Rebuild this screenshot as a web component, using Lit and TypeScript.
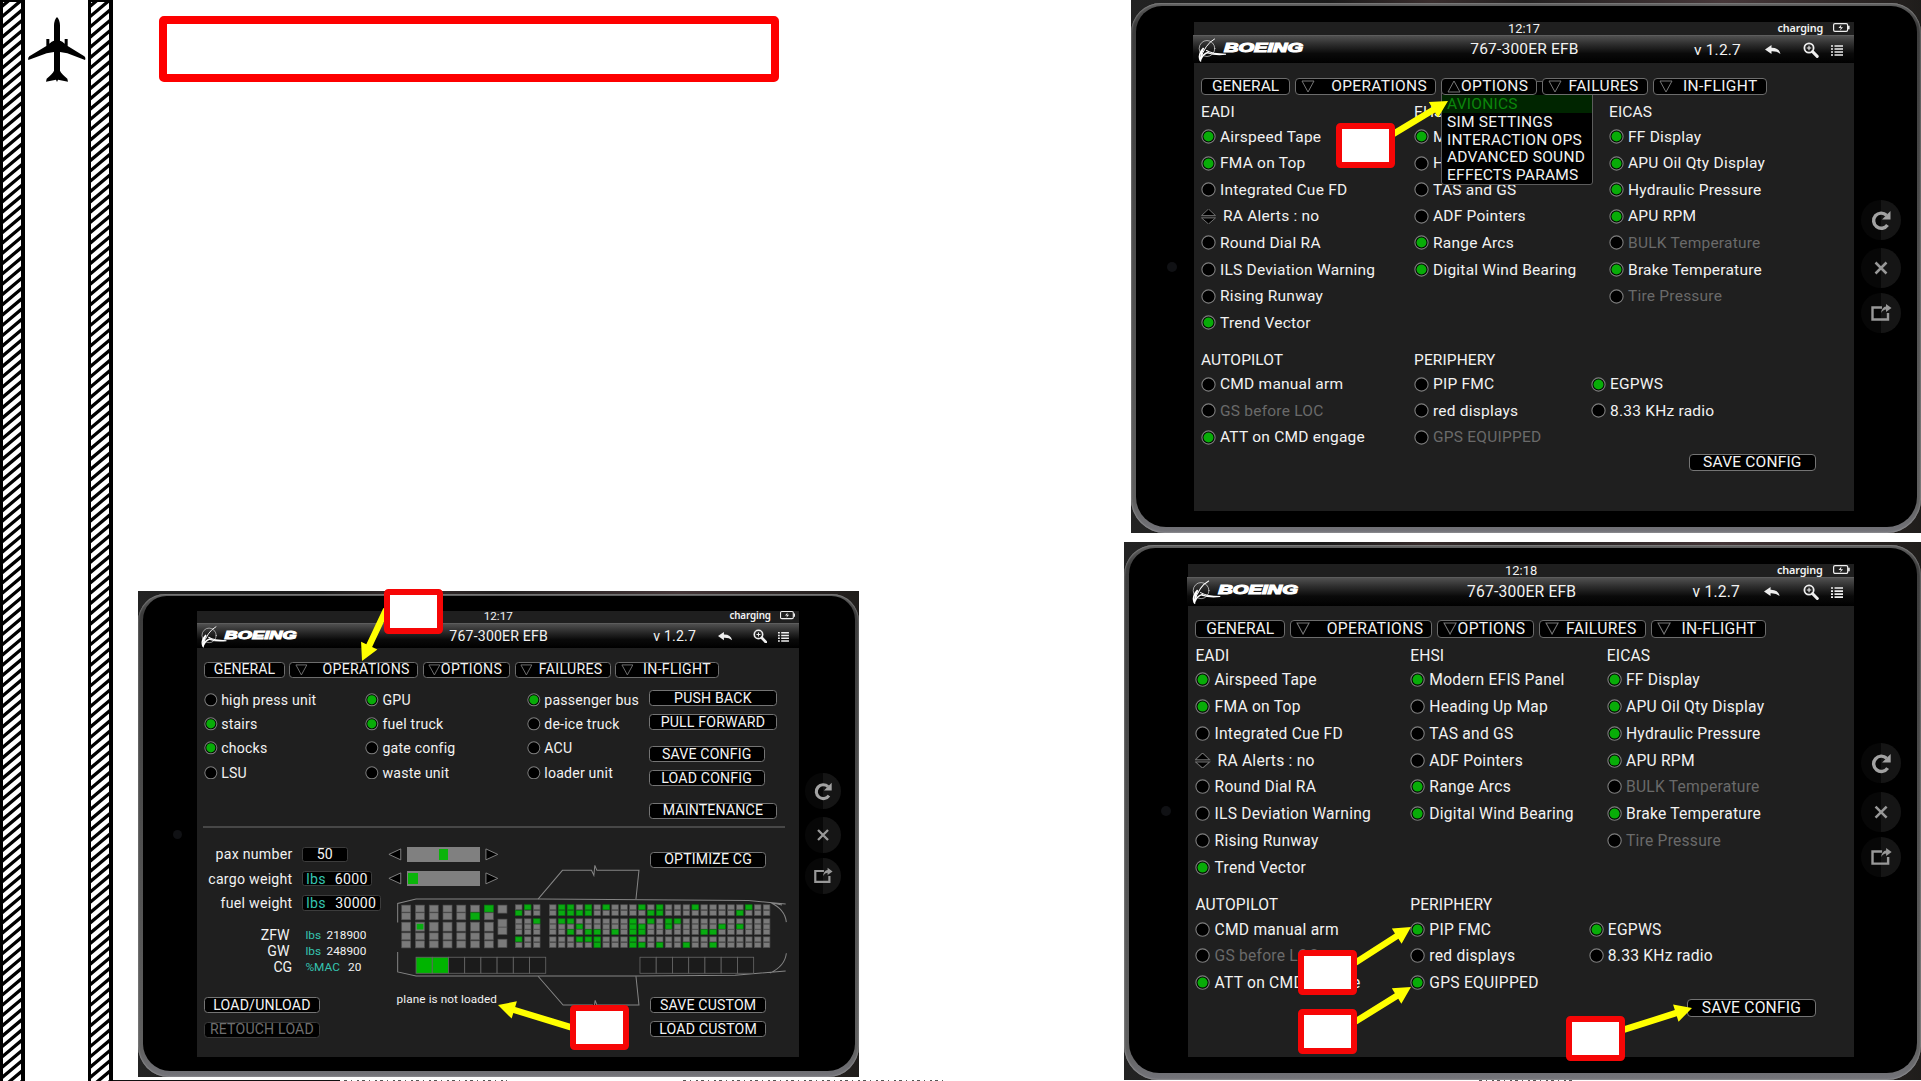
import { LitElement, html, svg, css, nothing } from "lit";
import { customElement, property } from "lit/decorators.js";
import { classMap } from "lit/directives/class-map.js";

type State = "on" | "off" | "dim" | "spin";
type Item = [string, State];
interface Section { title: string; items: Item[]; }

const ui = css`
  :host { display: block; font-family: Roboto, "Liberation Sans", sans-serif; font-size: 15.5px; color: #f2f2f2; }
  * { box-sizing: border-box; }
  .btn { display: flex; align-items: center; justify-content: center; height: 17.5px; width: 127.5px; border: 1px solid #747474; border-radius: 4px; background: #000; white-space: nowrap; line-height: 16px; letter-spacing: 0.2px; color: #f4f4f4; }
  .btn.wide { width: 141px; }
  .btn.disabled { color: #6e6e6e; border-color: #3a3a3a; }
`;

@customElement("efb-toggle")
class EfbToggle extends LitElement {
  @property() label = "";
  @property() state: State = "off";
  static styles = css`
    :host { display: flex; align-items: center; height: 26.6px; white-space: nowrap; font-size: 15.5px; letter-spacing: 0.23px; }
    .mark { width: 15px; height: 15px; margin-right: 4px; flex: none; }
    .spin { margin-right: 7px; }
    .dim { color: #6a6a6a; }
  `;
  render() {
    const spin = this.state === "spin";
    return html`
      <svg class=${classMap({ mark: true, spin })} viewBox="0 0 15 15">
        ${spin
          ? svg`<path d="M0.5 6.6 7.5 0 14.5 6.6Z M0.5 8.9 7.5 15 14.5 8.9Z" fill="#000" stroke="#6f6f6f" stroke-width="1"/>`
          : svg`<circle cx="7.5" cy="7.5" r="6.6" fill="#000" stroke="#7d7d7d" stroke-width="1.1"/>`}
        ${this.state === "on" ? svg`<circle cx="7.5" cy="7.5" r="5" fill="#08ac08"/>` : nothing}
      </svg>
      <span class=${this.state === "dim" ? "dim" : ""}>${this.label}</span>`;
  }
}

@customElement("efb-tabs")
class EfbTabs extends LitElement {
  @property({ type: Boolean }) open = false;
  static styles = [ui, css`
    :host { position: relative; }
    .bar { display: grid; grid-template-columns: 89px 141px 96px 105.5px 114px; column-gap: 5px; }
    .tab { position: relative; z-index: 1; display: flex; align-items: center; justify-content: space-between; height: 17.5px; padding: 0 8px 0 6px; border: 1px solid #6c6c6c; border-radius: 4px; background: #000; line-height: 16px; letter-spacing: 0.35px; white-space: nowrap; }
    .plain { justify-content: center; padding: 0; letter-spacing: 0; }
    .tri { width: 14px; height: 13px; flex: none; margin-left: -1px; }
    .menu { position: absolute; left: 240px; top: 3.5px; width: 152px; padding-top: 13px; height: 104px; background: #000; border: 1px solid #5c5c5c; border-radius: 3px; }
    .entry { height: 17.8px; line-height: 18px; padding-left: 5px; letter-spacing: 0.25px; white-space: nowrap; }
    .sel { background: #002500; color: #0b860b; }
  `];
  render() {
    const tabs = ["GENERAL", "OPERATIONS", "OPTIONS", "FAILURES", "IN-FLIGHT"];
    return html`
      <nav class="bar">
        ${tabs.map((t, i) => html`<div class=${classMap({ tab: true, plain: i === 0 })}>
          ${i === 0 ? nothing : html`<svg class="tri" viewBox="0 0 14 13"><path d=${this.open && i === 2 ? "M1 12 7 1 13 12Z" : "M1 1H13L7 12Z"} fill="none" stroke="#777"/></svg>`}
          <span>${t}</span></div>`)}
      </nav>
      ${this.open ? html`<div class="menu">
        ${["AVIONICS", "SIM SETTINGS", "INTERACTION OPS", "ADVANCED SOUND", "EFFECTS PARAMS"].map((m, i) =>
          html`<div class=${classMap({ entry: true, sel: i === 0 })}>${m}</div>`)}
      </div>` : nothing}`;
  }
}

@customElement("efb-options")
class EfbOptions extends LitElement {
  @property({ type: Boolean }) saved = false;
  static styles = [ui, css`
    .upper, .lower { display: grid; }
    .upper { grid-template-columns: 213px 195px auto; padding-top: 6.1px; }
    .lower { grid-template-columns: 213px 177px auto; margin-top: 12.5px; }
    .head { height: 22.2px; line-height: 23.4px; letter-spacing: 0.1px; }
    .save { margin: 3px 0 0 487.6px; }
  `];
  col(s: Section) {
    return html`<section><div class="head">${s.title}</div>
      ${s.items.map(([l, st]) => html`<efb-toggle .label=${l} .state=${st}></efb-toggle>`)}</section>`;
  }
  render() {
    const pip: State = this.saved ? "on" : "off";
    const gps: State = this.saved ? "on" : "dim";
    const upper: Section[] = [
      { title: "EADI", items: [["Airspeed Tape", "on"], ["FMA on Top", "on"], ["Integrated Cue FD", "off"], ["RA Alerts : no", "spin"], ["Round Dial RA", "off"], ["ILS Deviation Warning", "off"], ["Rising Runway", "off"], ["Trend Vector", "on"]] },
      { title: "EHSI", items: [["Modern EFIS Panel", "on"], ["Heading Up Map", "off"], ["TAS and GS", "off"], ["ADF Pointers", "off"], ["Range Arcs", "on"], ["Digital Wind Bearing", "on"]] },
      { title: "EICAS", items: [["FF Display", "on"], ["APU Oil Qty Display", "on"], ["Hydraulic Pressure", "on"], ["APU RPM", "on"], ["BULK Temperature", "dim"], ["Brake Temperature", "on"], ["Tire Pressure", "dim"]] },
    ];
    const lower: Section[] = [
      { title: "AUTOPILOT", items: [["CMD manual arm", "off"], ["GS before LOC", "dim"], ["ATT on CMD engage", "on"]] },
      { title: "PERIPHERY", items: [["PIP FMC", pip], ["red displays", "off"], ["GPS EQUIPPED", gps]] },
      { title: "", items: [["EGPWS", "on"], ["8.33 KHz radio", "off"]] },
    ];
    return html`
      <div class="upper">${upper.map((s) => this.col(s))}</div>
      <div class="lower">${lower.map((s) => this.col(s))}</div>
      <div class="btn save">SAVE CONFIG</div>`;
  }
}

/* Seat rows a..g of the economy cabin, keyed by column. */
const ECON_Y: Record<string, number> = { a: 162, b: 179, c: 204, d: 220, e: 236, f: 258, g: 275 };
const ECON_X = [402, 429, 456, ...Array.from({ length: 25 }, (_, i) => 504 + i * 26.66)];
const TAKEN: Record<number, string> = {
  0: "bf", 1: "a", 2: "c", 4: "abc", 5: "abce", 6: "bdf", 7: "abef", 8: "efg", 9: "a", 10: "e",
  12: "cdefg", 13: "adeg", 14: "bc", 15: "abg", 16: "cd", 17: "c", 18: "g", 19: "a", 20: "e",
  21: "eg", 22: "d", 24: "bd", 25: "a",
};

@customElement("efb-cabin")
class EfbCabin extends LitElement {
  static styles = css`
    :host { display: block; }
    .cabin { display: block; width: 100%; }
  `;
  seat(x: number, y: number, w: number, h: number, on: boolean) {
    return svg`<rect x=${x} y=${y} width=${w} height=${h} fill=${on ? "#08ac10" : "#7a7a7a"} stroke=${on ? "#0a7d10" : "#505050"} stroke-width="2"/>`;
  }
  render() {
    const biz: unknown[] = [];
    for (let i = 0; i < 7; i++) {
      const x = 62 + i * 41.2;
      [163, 186, 214, 246, 270].forEach((y, r) =>
        biz.push(this.seat(x, y, 27, r === 2 ? 27 : 21, i === 5 && r === 1 || i === 6 && r === 0)));
    }
    biz.push(svg`<rect x="107" y="219" width="20" height="17" fill="#08ac10"/>`);
    [[163, 24], [205, 24], [229, 22], [265, 25]].forEach(([y, h]) => biz.push(this.seat(350, y, 27, h, false)));
    const econ = ECON_X.map((x, i) => Object.entries(ECON_Y).map(([k, y]) => this.seat(x, y, 20, 15, (TAKEN[i] ?? "").includes(k))));
    return html`<svg class="cabin" viewBox="45 40 1170 430">
      <g fill="none" stroke="#858585" stroke-width="3">
        <path d="M50 215V158L105 145H480L1100 149 1211 160M1165 155Q1209 175 1213 214M1165 155 1200 163"/>
        <path d="M50 303V363L105 375H770L1060 373 1211 360M1165 366Q1209 345 1213 307"/>
        <path d="M470 145 543 59H630L637 74 640 44 646 59H772L763 145"/>
        <path d="M470 376 545 462H633L637 474 641 448 646 462H772L763 376"/>
      </g>
      ${biz}${econ}
      <g fill="none" stroke="#666" stroke-width="2.5">
        ${Array.from({ length: 8 }, (_, i) => svg`<rect x=${105 + i * 48.5} y="319" width="48.5" height="48" fill=${i < 2 ? "#00b400" : "#1b1b1b"}/>`)}
        ${Array.from({ length: 7 }, (_, i) => svg`<rect x=${775 + i * 48.6} y="319" width="48.6" height="48" fill="#1b1b1b"/>`)}
      </g>
    </svg>`;
  }
}

@customElement("efb-operations")
class EfbOperations extends LitElement {
  static styles = [ui, css`
    .services { display: flex; height: 163px; }
    .toggles { display: grid; grid-template-columns: 177px 177.5px 133px; width: 488px; padding-top: 11.2px; align-content: start; }
    .actions { display: flex; flex-direction: column; padding-top: 13.5px; }
    .g1 { margin-top: 9px; }
    .g2 { margin-top: 18px; }
    .rule { width: 639px; height: 2px; margin-left: -1px; background: #474747; }
    .load { display: grid; grid-template-columns: 211.5px 428px; }
    .left { padding-top: 15.7px; }
    .field { display: flex; align-items: center; height: 26.7px; letter-spacing: 0.3px; }
    .name { width: 97.3px; margin-right: 10px; text-align: right; flex: none; white-space: nowrap; }
    .box { display: flex; align-items: center; height: 17px; padding: 0 4px; border: 1px solid #3c3c3c; border-radius: 3px; background: #000; justify-content: space-between; }
    .pax { width: 51px; justify-content: center; }
    .cargo { width: 77.5px; }
    .fuel { width: 87px; }
    .unit { color: #35c4b0; }
    .sums { padding-top: 13px; }
    .sum { display: flex; align-items: center; height: 17.7px; }
    .sum .name { width: 94px; margin-right: 17.5px; }
    .sum .unit { font-size: 13px; margin-right: 6px; }
    .sum .num { font-size: 13px; }
    .sum.cg .name { width: 97px; margin-right: 14.5px; }
    .sum.cg .unit { margin-right: 9px; }
    .foot { padding-top: 24px; display: flex; flex-direction: column; gap: 9.3px; }
    .head { display: flex; justify-content: space-between; height: 42px; padding: 0 22.5px 0 0; margin-top: 20.6px; }
    .sliders { display: flex; flex-direction: column; gap: 9.5px; margin-left: -9px; }
    .slider { display: flex; align-items: center; gap: 5px; height: 17px; }
    .track { width: 80.5px; height: 17px; background: #808080; display: flex; align-items: center; }
    .thumb { width: 10px; height: 12.5px; background: #0ab40a; }
    .arrow { width: 15px; height: 14px; }
    .optimize { margin-top: 5.5px; }
    .plane { margin-top: -22.5px; margin-left: -1px; }
    .base { display: flex; justify-content: space-between; margin-top: -12.3px; padding-right: 22.5px; }
    .note { font-size: 12.9px; letter-spacing: 0.1px; line-height: 14px; margin-top: -4px; }
    .stack { display: flex; flex-direction: column; gap: 9.3px; }
  `];
  slider(pos: number) {
    return html`<div class="slider">
      <svg class="arrow" viewBox="0 0 15 14"><path d="M14 1V13L1 7Z" fill="#000" stroke="#888"/></svg>
      <div class="track"><div class="thumb" style="margin-left:${pos}px"></div></div>
      <svg class="arrow" viewBox="0 0 15 14"><path d="M1 1V13L14 7Z" fill="#000" stroke="#888"/></svg>
    </div>`;
  }
  render() {
    const cols: Item[][] = [
      [["high press unit", "off"], ["stairs", "on"], ["chocks", "on"], ["LSU", "off"]],
      [["GPU", "on"], ["fuel truck", "on"], ["gate config", "off"], ["waste unit", "off"]],
      [["passenger bus", "on"], ["de-ice truck", "off"], ["ACU", "off"], ["loader unit", "off"]],
    ];
    return html`
      <div class="services">
        <div class="toggles">${cols.map((c) => html`<div>${c.map(([l, s]) => html`<efb-toggle .label=${l} .state=${s}></efb-toggle>`)}</div>`)}</div>
        <div class="actions">
          <div class="btn wide">PUSH BACK</div>
          <div class="btn wide g1">PULL FORWARD</div>
          <div class="btn g2">SAVE CONFIG</div>
          <div class="btn g1">LOAD CONFIG</div>
          <div class="btn wide g2">MAINTENANCE</div>
        </div>
      </div>
      <div class="rule"></div>
      <div class="load">
        <div class="left">
          <div class="field"><span class="name">pax number</span><span class="box pax">50</span></div>
          <div class="field"><span class="name">cargo weight</span><span class="box cargo"><span class="unit">lbs</span><span>6000</span></span></div>
          <div class="field"><span class="name">fuel weight</span><span class="box fuel"><span class="unit">lbs</span><span>30000</span></span></div>
          <div class="sums">
            <div class="sum"><span class="name">ZFW</span><span class="unit">lbs</span><span class="num">218900</span></div>
            <div class="sum"><span class="name">GW</span><span class="unit">lbs</span><span class="num">248900</span></div>
            <div class="sum cg"><span class="name">CG</span><span class="unit">%MAC</span><span class="num">20</span></div>
          </div>
          <div class="foot"><div class="btn">LOAD/UNLOAD</div><div class="btn disabled">RETOUCH LOAD</div></div>
        </div>
        <div class="right">
          <div class="head">
            <div class="sliders">${this.slider(35)}${this.slider(2)}</div>
            <div class="btn optimize">OPTIMIZE CG</div>
          </div>
          <efb-cabin class="plane"></efb-cabin>
          <div class="base">
            <span class="note">plane is not loaded</span>
            <div class="stack"><div class="btn">SAVE CUSTOM</div><div class="btn">LOAD CUSTOM</div></div>
          </div>
        </div>
      </div>`;
  }
}

@customElement("efb-tablet")
class EfbTablet extends LitElement {
  @property() time = "12:17";
  @property() view: "menu" | "saved" | "operations" = "menu";
  static styles = [ui, css`
    :host { isolation: isolate; }
    .backdrop { width: 100%; height: 533px; background: linear-gradient(90deg, #232323, #1a1a1a 25%, #382c2c 38%, #211f1f 50%, #453638 75%, #1f1d1b); overflow: hidden; padding: 3px 0 0; }
    .shell { height: 530px; border-radius: 30px 30px 34px 34px; padding: 2.5px 4px 6px 5px; background: linear-gradient(180deg, #5f5f5f, #3c3c3c 4%, #4f4f4f 50%, #606060 94%, #74747a); box-shadow: inset 0 0 2px #bbb; }
    .glass { height: 100%; border-radius: 26px 26px 30px 30px; background: #000; display: flex; padding-top: 16.5px; }
    .bezel { flex: 1; display: flex; justify-content: flex-end; padding: 240px 17px 0 0; }
    .lens { width: 10px; height: 10px; border-radius: 50%; background: #101114; }
    .screen { width: 660px; height: 489px; background: #1f1f1f; flex: none; }
    .status { display: grid; grid-template-columns: 1fr auto 1fr; align-items: center; height: 13px; font-size: 12.8px; line-height: 13px; }
    .power { display: flex; justify-content: flex-end; align-items: center; gap: 10px; padding-right: 4px; font-family: "Noto Sans", sans-serif; font-size: 10.8px; letter-spacing: -0.15px; font-weight: 600; margin-top: -3px; }
    .batt { width: 17px; height: 9px; }
    .title { display: grid; grid-template-columns: 160px 1fr 160px; grid-template-rows: 27px; height: 28px; align-items: center; background: linear-gradient(180deg, #505050, #2e2e2e 30%, #0a0a0a 65%, #000); border-top: 1px solid #5d5d5d; margin-left: -1px; }
    .logo { width: 108px; height: 27px; margin-left: 4px; }
    .name { text-align: center; letter-spacing: 0.2px; line-height: 27px; white-space: nowrap; padding-left: 2px; }
    .tools { display: flex; align-items: center; justify-content: flex-end; height: 27px; padding-right: 11px; white-space: nowrap; }
    .ver { margin-right: 24px; letter-spacing: 0.2px; flex: none; }
    .back { width: 16px; height: 10px; margin-right: 22px; flex: none; }
    .zoomer { width: 16px; height: 16px; margin-right: 12px; flex: none; }
    .list { width: 12px; height: 12px; flex: none; }
    .body { padding: 14.5px 0 0 7px; }
    .side { width: var(--side, 63px); flex: none; display: flex; flex-direction: column; align-items: center; padding-top: 177.5px; }
    .key { width: 40px; height: 40px; border-radius: 50%; background: linear-gradient(90deg, #070707 49%, #151515 51%); display: flex; align-items: center; justify-content: center; margin-bottom: 8px; margin-right: 9px; flex: none; }
    .key.tight { margin-bottom: 5px; }
    .glyph { width: 22px; height: 22px; }
  `];
  render() {
    const ops = this.view === "operations";
    return html`<div class="backdrop"><div class="shell"><div class="glass">
      <div class="bezel"><div class="lens"></div></div>
      <div class="screen">
        <div class="status"><span></span><span>${this.time}</span>
          <span class="power">charging
            <svg class="batt" viewBox="0 0 17 9"><rect x=".6" y=".6" width="14" height="7.8" rx="1.4" fill="none" stroke="#eee" stroke-width="1.2"/><path d="M15 2.8h1.6v3.4H15Z" fill="#eee"/><path d="M8.4 1.6 5.5 5H7.8L7 7.4 10 4.2H7.8Z" fill="#eee"/></svg>
          </span>
        </div>
        <header class="title">
          <svg class="logo" viewBox="0 0 108 27">
            <g fill="none" stroke="#fff" stroke-linecap="round">
              <ellipse cx="10" cy="12.5" rx="7.8" ry="8" stroke-width=".7" stroke="#ddd"/>
              <path d="M17.5 3Q8 8 3 24" stroke-width="1"/>
              <path d="M3.6 25Q.2 19 6.5 12Q3.6 18 4 23Q6.5 17.5 11 16.5" stroke-width="1.5"/>
              <path d="M9.5 14.5Q15 18 29 18.3Q18 19.5 11 17" stroke-width="1.1"/>
            </g>
            <text x="27" y="16.3" textLength="79" lengthAdjust="spacingAndGlyphs" font-family="Liberation Sans, sans-serif" font-weight="700" font-style="italic" font-size="12.4" fill="#fff" stroke="#fff" stroke-width="1.1">BOEING</text>
          </svg>
          <span class="name">767-300ER EFB</span>
          <div class="tools">
            <span class="ver">v 1.2.7</span>
            <svg class="back" viewBox="0 0 16 10"><path d="M0 4.5 6.5 0V2.8Q14 2.6 15.5 9 12 6 6.5 6.3V9Z" fill="#eee"/></svg>
            <svg class="zoomer" viewBox="0 0 16 16"><circle cx="6" cy="6" r="4.6" fill="none" stroke="#eee" stroke-width="1.8"/><path d="M9.6 9.6 14.2 14.4" stroke="#eee" stroke-width="3" stroke-linecap="round"/><path d="M3.8 6H8.2M6 3.8V8.2" stroke="#eee" stroke-width="1.1"/></svg>
            <svg class="list" viewBox="0 0 12 12"><path d="M0 2H2M3.5 2H12M0 5H2M3.5 5H12M0 8H2M3.5 8H12M0 11H2M3.5 11H12" stroke="#eee" stroke-width="1.7"/></svg>
          </div>
        </header>
        <div class="body">
          <efb-tabs ?open=${this.view === "menu"}></efb-tabs>
          ${ops ? html`<efb-operations></efb-operations>` : html`<efb-options ?saved=${this.view === "saved"}></efb-options>`}
        </div>
      </div>
      <div class="side">
        <div class="key"><svg class="glyph" viewBox="0 0 22 22"><path d="M16.5 6.2A7.6 7.6 0 1 0 17.5 16" fill="none" stroke="#a2a2a2" stroke-width="3.4"/><path d="M20.5 2V10.5H12Z" fill="#a2a2a2"/></svg></div>
        <div class="key tight"><svg class="glyph" viewBox="0 0 22 22"><path d="M5.5 5.5 16.5 16.5M16.5 5.5 5.5 16.5" stroke="#989898" stroke-width="2.5"/></svg></div>
        <div class="key"><svg class="glyph" viewBox="0 0 22 22"><path d="M12 5.5H2.5V17.5H18V11" fill="none" stroke="#989898" stroke-width="2.4"/><path d="M11 11Q12 5 16 4.5V2L21.5 6 16 10V7.5Q13 7.5 11 11Z" fill="#989898"/></svg></div>
      </div>
    </div></div></div>`;
  }
}

/* Arrow polygon from a callout edge to its target. */
function arrow(x1: number, y1: number, x2: number, y2: number) {
  const len = Math.hypot(x2 - x1, y2 - y1);
  const deg = (Math.atan2(y2 - y1, x2 - x1) * 180) / Math.PI;
  return svg`<path transform="translate(${x1} ${y1}) rotate(${deg})" fill="#ff0" d="M-3 -3.2H${len - 17}V-9L${len} 0 ${len - 17} 9V3.2H-3Z"/>`;
}

@customElement("app-root")
class AppRoot extends LitElement {
  static styles = css`
    :host { display: block; }
    * { box-sizing: border-box; }
    .page { position: relative; display: flex; width: 1921px; height: 1081px; overflow: hidden; background: #fff; }
    .runway { display: flex; width: 113px; flex: none; }
    .edge { width: 25px; height: 1082px; display: block; flex: none; }
    .lane { width: 63px; flex: none; padding: 17px 0 0 3px; }
    .jet { width: 58px; height: 66px; display: block; }
    .left { display: flex; flex-direction: column; flex: 1; padding: 16px 0 0 25px; }
    .banner { width: 620px; height: 66px; margin-left: 21px; border: 8px solid #fe0000; border-radius: 5px; }
    .slot { padding-top: 509px; }
    .t3 { width: 790.7px; zoom: 0.9115; --side: 61.5px; }
    .right { display: flex; flex-direction: column; align-items: flex-end; gap: 9px; width: 797px; flex: none; }
    .t1 { width: 790px; }
    .t2 { width: 790.3px; zoom: 1.0085; --side: 62.5px; }
    .notes { position: absolute; left: 0; top: 0; width: 1921px; height: 1081px; z-index: 5; }
  `;
  render() {
    const boxes = [[1336, 123], [384, 589], [570, 1005], [1298, 950], [1298, 1009], [1566, 1016]];
    return html`<main class="page">
      <aside class="runway">
        ${this.edge()}
        <div class="lane"><svg class="jet" viewBox="84 51 174 198"><path d="M171 51Q163 58 162 76V122Q155 124 148 131V117H139V138L88 169Q83 174 85 180L140 160 162 156V212Q158 221 140 236L138 245 168 239 171 246 174 239 204 245 202 236Q184 221 180 212V156L202 160 255 180Q258 174 253 169L203 138V117H194V131Q187 124 180 122V76Q179 58 171 51Z"/></svg></div>
        ${this.edge()}
      </aside>
      <div class="left">
        <div class="banner"></div>
        <div class="slot"><efb-tablet class="t3" time="12:17" view="operations"></efb-tablet></div>
      </div>
      <div class="right">
        <efb-tablet class="t1" time="12:17" view="menu"></efb-tablet>
        <efb-tablet class="t2" time="12:18" view="saved"></efb-tablet>
      </div>
      <svg class="notes" viewBox="0 0 1921 1081">
        ${arrow(1395, 133, 1448, 101)}${arrow(385, 612, 362, 661)}${arrow(570, 1027, 498, 1005)}
        ${arrow(1358, 961, 1411, 927)}${arrow(1358, 1020, 1411, 987)}${arrow(1626, 1029, 1692, 1008)}
        ${boxes.map(([x, y]) => svg`<rect x=${x + 3} y=${y + 3} width="53" height="39" rx="1.5" fill="#fff" stroke="#f60606" stroke-width="6"/>`)}
        <path d="M113 1080.5H340" stroke="#111"/>
        <path d="M344 1080.5H507M683 1080.5H945M1479 1080.5H1572" stroke="#555" stroke-dasharray="3 4 1 5 2 3"/>
      </svg>
    </main>`;
  }
  edge() {
    const hatch = Array.from({ length: 109 }, (_, i) => `M0 ${(i * 10.3 + 8).toFixed(1)}l25 -21`).join("");
    return html`<svg class="edge" viewBox="0 0 25 1082">
      <rect width="25" height="1082" fill="#fff"/>
      <path d=${hatch} stroke="#000" stroke-width="3.3"/>
      <path d="M0 0H3V1082H0ZM21 0H25V1082H21ZM0 0H25V2H0Z"/>
    </svg>`;
  }
}
